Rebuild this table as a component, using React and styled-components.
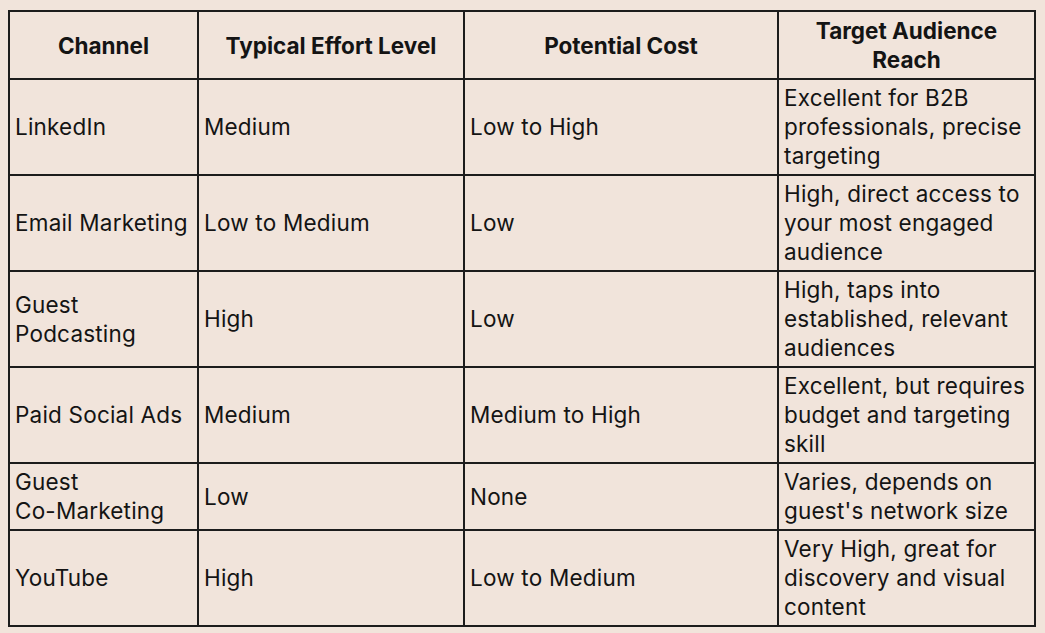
import React from 'react';
import styled, { createGlobalStyle } from 'styled-components';

const GlobalStyle = createGlobalStyle`
  html, body {
    margin: 0;
    background: #f1e4db;
  }
  body {
    padding: 10px 8px;
    font-family: Inter, "Open Sans", Arial, sans-serif;
    color: #141414;
  }
`;

// Whole comparison table
const Table = styled.table`
  border-collapse: collapse;
  width: 1026px;
  table-layout: fixed;
  font-size: 22.5px;
  line-height: 29px;
`;

const HeadCell = styled.th`
  border: 2px solid #1c1c1c;
  padding: 4px 6px;
  font-weight: 700;
  text-align: center;
  vertical-align: middle;
  height: 58px;
`;

const Cell = styled.td`
  border: 2px solid #1c1c1c;
  padding: 3px 5px 4px 5px;
  font-weight: 400;
  letter-spacing: 0.2px;
  text-align: left;
  vertical-align: middle;
  height: ${props => props.tall ? '87px' : '58px'};
`;

const NoBreak = styled.span`
  white-space: nowrap;
`;

const columns = [
  { label: 'Channel', width: 189 },
  { label: 'Typical Effort Level', width: 266 },
  { label: 'Potential Cost', width: 314 },
  { label: 'Target Audience Reach', width: 257 },
];

const rows = [
  { tall: true, cells: ['LinkedIn', 'Medium', 'Low to High', 'Excellent for B2B professionals, precise targeting'] },
  { tall: true, cells: ['Email Marketing', 'Low to Medium', 'Low', 'High, direct access to your most engaged audience'] },
  { tall: true, cells: ['Guest Podcasting', 'High', 'Low', 'High, taps into established, relevant audiences'] },
  { tall: true, cells: ['Paid Social Ads', 'Medium', 'Medium to High', 'Excellent, but requires budget and targeting skill'] },
  { tall: false, cells: [<>Guest <NoBreak>Co-Marketing</NoBreak></>, 'Low', 'None', "Varies, depends on guest's network size"] },
  { tall: true, cells: ['YouTube', 'High', 'Low to Medium', 'Very High, great for discovery and visual content'] },
];

const App = () => {
  return (
    <>
      <GlobalStyle />
      <Table>
        <colgroup>
          {columns.map(col => (
            <col key={col.label} style={{ width: col.width }} />
          ))}
        </colgroup>
        <thead>
          <tr>
            {columns.map(col => (
              <HeadCell key={col.label}>{col.label}</HeadCell>
            ))}
          </tr>
        </thead>
        <tbody>
          {rows.map((row, r) => (
            <tr key={r}>
              {row.cells.map((text, i) => (
                <Cell key={i} tall={row.tall}>{text}</Cell>
              ))}
            </tr>
          ))}
        </tbody>
      </Table>
    </>
  );
};

export default App;
